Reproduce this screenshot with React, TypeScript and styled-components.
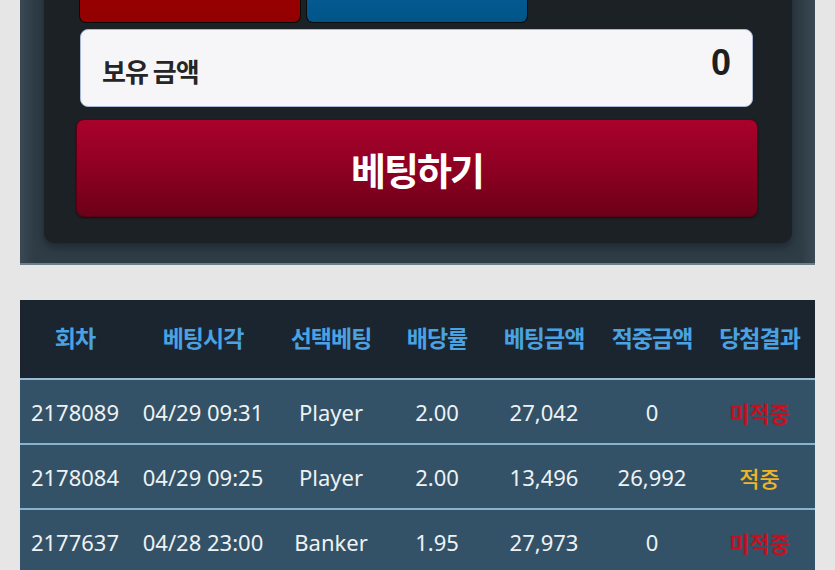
import styled, { createGlobalStyle } from 'styled-components';

type BetRow = {
  round: string;
  time: string;
  pick: string;
  odds: string;
  amount: string;
  win: string;
  result: 'win' | 'lose';
};

const rows: BetRow[] = [
  { round: '2178089', time: '04/29 09:31', pick: 'Player', odds: '2.00', amount: '27,042', win: '0', result: 'lose' },
  { round: '2178084', time: '04/29 09:25', pick: 'Player', odds: '2.00', amount: '13,496', win: '26,992', result: 'win' },
  { round: '2177637', time: '04/28 23:00', pick: 'Banker', odds: '1.95', amount: '27,973', win: '0', result: 'lose' },
];

const columns = [
  { label: '회차', width: 110 },
  { label: '베팅시각', width: 146 },
  { label: '선택베팅', width: 110 },
  { label: '배당률', width: 102 },
  { label: '베팅금액', width: 112 },
  { label: '적중금액', width: 104 },
  { label: '당첨결과', width: 111 },
];

export default function App() {
  return (
    <>
      <GlobalStyle />
      <Page>
        <BetPanel>
          <BetBox>
            <PickRow>
              <PickButton $tone="red" />
              <PickButton $tone="blue" />
            </PickRow>
            <Balance>
              <BalanceLabel>보유 금액</BalanceLabel>
              <BalanceValue>0</BalanceValue>
            </Balance>
            <BetButton>베팅하기</BetButton>
          </BetBox>
        </BetPanel>

        <HistoryTable>
          <colgroup>
            {columns.map((col) => (
              <col key={col.label} style={{ width: col.width }} />
            ))}
          </colgroup>
          <thead>
            <tr>
              {columns.map((col) => (
                <HeadCell key={col.label}>{col.label}</HeadCell>
              ))}
            </tr>
          </thead>
          <tbody>
            {rows.map((row) => (
              <tr key={row.round}>
                <Cell>{row.round}</Cell>
                <Cell>{row.time}</Cell>
                <Cell>{row.pick}</Cell>
                <Cell>{row.odds}</Cell>
                <Cell>{row.amount}</Cell>
                <Cell>{row.win}</Cell>
                <ResultCell $result={row.result}>{row.result === 'win' ? '적중' : '미적중'}</ResultCell>
              </tr>
            ))}
          </tbody>
        </HistoryTable>
      </Page>
    </>
  );
}

const GlobalStyle = createGlobalStyle`
  html, body {
    margin: 0;
    padding: 0;
    background: #e6e6e6;
    overflow: hidden;
  }
  * {
    box-sizing: border-box;
  }
`;

const Page = styled.div`
  width: 835px;
  height: 570px;
  padding: 0 20px;
  overflow: hidden;
  font-family: 'Noto Sans', 'Noto Sans CJK KR', sans-serif;
`;

const BetPanel = styled.section`
  margin-top: -40px;
  padding: 0 23px 20px 24px;
  background: linear-gradient(90deg, #3a4954 0px, #2e3c46 14px, #2e3c46 calc(100% - 14px), #3a4954 100%);
  border-bottom: 2px solid #6d7f8b;
`;

const BetBox = styled.div`
  display: flex;
  flex-direction: column;
  padding: 0 34px 26px 32px;
  background: #1b2124;
  border-radius: 0 0 10px 10px;
  box-shadow: 0 4px 8px rgba(0, 0, 0, 0.35);
`;

const PickRow = styled.div`
  display: flex;
  gap: 5px;
  padding-left: 3px;
`;

const PickButton = styled.div<{ $tone: 'red' | 'blue' }>`
  width: 222px;
  height: 63px;
  border-radius: 0 0 7px 7px;
  border: 1px solid #0b0b0b;
  border-top: none;
  background: ${({ $tone }) =>
    $tone === 'red'
      ? 'linear-gradient(180deg, #a00000, #930000)'
      : 'linear-gradient(180deg, #0a66a0, #005488)'};
`;

const Balance = styled.div`
  display: flex;
  align-items: center;
  justify-content: space-between;
  height: 78px;
  margin: 6px 5px 12px 4px;
  padding: 0 21px 0 21px;
  background: #f6f6f8;
  border: 1px solid #a9b8d6;
  border-radius: 8px;
`;

const BalanceLabel = styled.span`
  margin-top: 5px;
  font-family: 'Noto Sans CJK KR', sans-serif;
  font-size: 26px;
  font-weight: 700;
  letter-spacing: -1px;
  color: #252525;
`;

const BalanceValue = styled.span`
  margin-top: -10px;
  font-family: 'Liberation Sans', 'Noto Sans', sans-serif;
  font-size: 36px;
  font-weight: 700;
  color: #1e1e1e;
`;

const BetButton = styled.button`
  height: 98px;
  margin: 0;
  padding: 0;
  border: 1px solid #5a0012;
  border-radius: 8px;
  background: linear-gradient(180deg, #a9022b 0%, #8c0021 55%, #6c0018 100%);
  box-shadow: 0 1px 2px rgba(0, 0, 0, 0.5);
  font-family: 'Noto Sans CJK KR', sans-serif;
  font-size: 38px;
  font-weight: 700;
  letter-spacing: -2px;
  color: #ffffff;
  cursor: pointer;
`;

const HistoryTable = styled.table`
  width: 795px;
  margin-top: 35px;
  border-collapse: collapse;
  table-layout: fixed;
`;

const HeadCell = styled.th`
  height: 79px;
  padding: 0 0 4px;
  background: #1a2530;
  border-bottom: 2px solid #99bcd4;
  font-family: 'Noto Sans CJK KR', sans-serif;
  font-size: 23px;
  font-weight: 700;
  letter-spacing: -1px;
  color: #4aa2e2;
  text-align: center;
`;

const Cell = styled.td`
  height: 65px;
  padding: 0;
  background: #345267;
  border-bottom: 2px solid #87b2d0;
  font-size: 22px;
  font-weight: 400;
  color: #eef2f4;
  text-align: center;
  white-space: nowrap;
`;

const ResultCell = styled(Cell)<{ $result: 'win' | 'lose' }>`
  font-family: 'Noto Sans CJK KR', sans-serif;
  font-weight: ${({ $result }) => ($result === 'lose' ? 700 : 500)};
  color: ${({ $result }) => ($result === 'lose' ? '#c4101f' : '#f0b526')};
`;
